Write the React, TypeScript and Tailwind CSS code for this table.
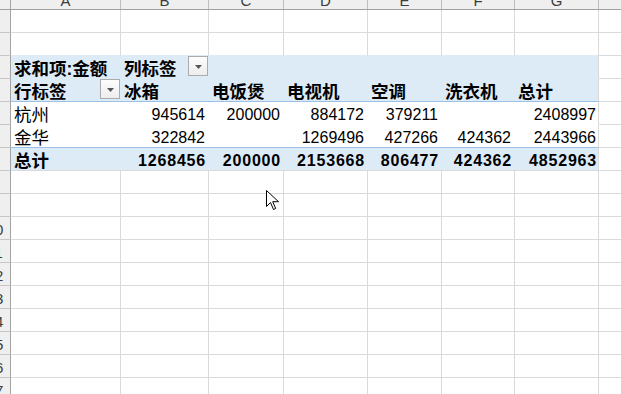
import React from 'react';

const FONT = "font-['Liberation_Sans','Noto_Sans_CJK_SC',sans-serif]";

// grid widths include the 1px right gridline
const COLS = [
  { w: 'w-[110px]', letter: 'A' },
  { w: 'w-[88px]', letter: 'B' },
  { w: 'w-[75px]', letter: 'C' },
  { w: 'w-[84px]', letter: 'D' },
  { w: 'w-[74px]', letter: 'E' },
  { w: 'w-[73px]', letter: 'F' },
  { w: 'w-[84px]', letter: 'G' },
];

// pivot widths: last column loses 1px to the container's right gridline
const PW = ['w-[110px]', 'w-[88px]', 'w-[75px]', 'w-[84px]', 'w-[74px]', 'w-[73px]', 'w-[83px]'];

const HEADERS = ['冰箱', '电饭煲', '电视机', '空调', '洗衣机', '总计'];
const DATA = [
  { label: '杭州', vals: ['945614', '200000', '884172', '379211', '', '2408997'] },
  { label: '金华', vals: ['322842', '', '1269496', '427266', '424362', '2443966'] },
];
const TOTALS = ['1268456', '200000', '2153668', '806477', '424362', '4852963'];

const RowHead = ({ n }: { n: number }) => (
  <div className="w-[11px] shrink-0 overflow-hidden flex items-center bg-[#efefef] border-r border-b border-r-[#a3a3a3] border-b-[#c6c6c6]">
    <div className="w-[30px] shrink-0 -ml-[20px] pt-[3px] text-center text-[15px] leading-none text-[#3c3c3c]">{n}</div>
  </div>
);

const Drop = () => (
  <div className="self-start ml-auto mr-[1px] w-[20px] h-[20px] shrink-0 flex items-center justify-center border border-[#ababab] bg-linear-to-b from-[#fdfdfd] to-[#ededed]">
    <svg width="7" height="4" viewBox="0 0 7 4" className="mt-[2px]">
      <path d="M0 0h7L3.5 4z" fill="#555" />
    </svg>
  </div>
);

const GridRow = ({ n, blueBelow }: { n: number; blueBelow?: boolean }) => (
  <div className="flex h-[23px]">
    <RowHead n={n} />
    {COLS.map(c => (
      <div
        key={c.letter}
        className={`${c.w} shrink-0 border-r border-b border-[#dadada] ${blueBelow ? 'border-b-[#ddebf7]' : ''}`}
      />
    ))}
    <div className="flex-1 border-b border-[#dadada]" />
  </div>
);

const PivotRow = ({
  n,
  blue,
  line,
  children,
}: {
  n: number;
  blue?: boolean;
  line: string;
  children: React.ReactNode;
}) => (
  <div className="flex h-[23px]">
    <RowHead n={n} />
    <div className={`w-[588px] shrink-0 flex border-b border-r border-r-[#dadada] ${line} ${blue ? 'bg-[#ddebf7]' : 'bg-white'}`}>
      {children}
    </div>
    <div className="flex-1 border-b border-[#dadada]" />
  </div>
);

const Label = ({ w, bold, children }: { w: string; bold?: boolean; children: React.ReactNode }) => (
  <div className={`${w} shrink-0 flex items-end pl-[3px] text-[17.5px] leading-[18px] text-black ${bold ? 'font-bold' : ''}`}>
    {children}
  </div>
);

const Num = ({ w, bold, last, children }: { w: string; bold?: boolean; last?: boolean; children: React.ReactNode }) => (
  <div
    className={`${w} shrink-0 flex items-end justify-end text-[16px] leading-[18px] text-black ${
      bold ? 'font-bold tracking-[0.8px]' : ''
    } ${last ? (bold ? 'pr-[1px]' : 'pr-[2px]') : bold ? 'pr-[3px]' : 'pr-[4px]'}`}
  >
    {children}
  </div>
);

export default function App() {
  return (
    <div className={`relative w-full h-[394px] overflow-hidden bg-white ${FONT}`}>
      {/* column letters */}
      <div className="flex h-[10px] border-b border-[#a0a0a0] bg-[#efefef]">
        <div className="w-[11px] shrink-0 border-r border-[#a3a3a3]" />
        {COLS.map(c => (
          <div key={c.letter} className={`${c.w} shrink-0 flex items-end justify-center overflow-hidden border-r border-[#bdbdbd]`}>
            <span className="mb-[1px] text-[15px] leading-[15px] text-[#3c3c3c]">{c.letter}</span>
          </div>
        ))}
        <div className="flex-1" />
      </div>

      <GridRow n={1} />
      <GridRow n={2} blueBelow />

      <PivotRow n={3} blue line="border-b-[#ddebf7]">
        <Label w={PW[0]} bold>求和项:金额</Label>
        <Label w={PW[1]} bold>
          <span>列标签</span>
          <Drop />
        </Label>
      </PivotRow>

      <PivotRow n={4} blue line="border-b-[#9bc2e6]">
        <Label w={PW[0]} bold>
          <span>行标签</span>
          <Drop />
        </Label>
        {HEADERS.map((h, i) => (
          <Label key={h} w={PW[i + 1]} bold>{h}</Label>
        ))}
      </PivotRow>

      {DATA.map((r, ri) => (
        <PivotRow key={r.label} n={5 + ri} line={ri === 0 ? 'border-b-white' : 'border-b-[#9bc2e6]'}>
          <Label w={PW[0]}>{r.label}</Label>
          {r.vals.map((v, i) => (
            <Num key={i} w={PW[i + 1]} last={i === 5}>{v}</Num>
          ))}
        </PivotRow>
      ))}

      <PivotRow n={7} blue line="border-b-[#dadada]">
        <Label w={PW[0]} bold>总计</Label>
        {TOTALS.map((v, i) => (
          <Num key={i} w={PW[i + 1]} bold last={i === 5}>{v}</Num>
        ))}
      </PivotRow>

      {Array.from({ length: 10 }, (_, i) => (
        <GridRow key={i} n={8 + i} />
      ))}

      {/* mouse pointer */}
      <svg className="absolute left-[266px] top-[190px]" width="13" height="21" viewBox="0 0 13 21">
        <path d="M0.5 0.5v16l4-4 3 7 2.2-1-3-6.8h5.8z" fill="white" stroke="black" strokeWidth="1" />
      </svg>
    </div>
  );
}
